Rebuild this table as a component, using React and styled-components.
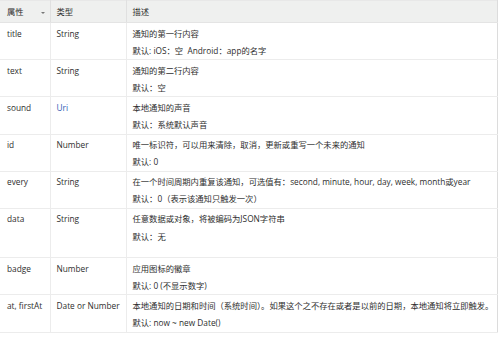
import React from 'react';
import styled, { createGlobalStyle } from 'styled-components';

const GlobalStyle = createGlobalStyle`
  body {
    margin: 0;
    background: #ffffff;
    font-family: "Open Sans", "Noto Sans CJK SC", sans-serif;
  }
`;

const Table = styled.table`
  width: 498px;
  border-collapse: collapse;
  table-layout: fixed;
  font-size: 8.3px;
  color: #2e2e2e;
  border-top: 1px solid #e8e8e8;
  border-right: 1px solid #dcdcdc;
  border-bottom: 1px solid #e2e2e2;
`;

const HeadCell = styled.th`
  position: relative;
  height: 21px;
  padding: 0 6px;
  text-align: left;
  font-weight: normal;
  background: #eff0ef;
  border-left: ${(p) => (p.$first ? 'none' : '1px solid #e0e0e0')};
  border-bottom: 1px solid #e4e4e4;
  padding-left: ${(p) => (p.$first ? '7px' : '6px')};
  line-height: 21px;
`;

const SortArrow = styled.span`
  position: absolute;
  right: 5px;
  top: 11px;
  width: 0;
  height: 0;
  border-left: 2px solid transparent;
  border-right: 2px solid transparent;
  border-top: 2.5px solid #777;
`;

const Row = styled.tr`
  border-bottom: 1px solid #ececec;
`;

const Cell = styled.td`
  vertical-align: top;
  padding: 1.5px 6px ${(p) => (p.$tall ? '12.5px' : '0.5px')};
  padding-left: ${(p) => (p.$first ? '7px' : '6px')};
  border-left: ${(p) => (p.$first ? 'none' : '1px solid #ececec')};
  white-space: pre;
`;

const Line = styled.div`
  height: 17.1px;
  line-height: 17.1px;
  overflow: visible;
`;

const TypeText = styled.span`
  color: ${(p) => (p.$link ? '#2f5cb5' : 'inherit')};
`;

const rows = [
  { name: 'title', type: 'String', desc: ['通知的第一行内容', '默认: iOS：空  Android：app的名字'] },
  { name: 'text', type: 'String', desc: ['通知的第二行内容', '默认：空'] },
  { name: 'sound', type: 'Uri', link: true, desc: ['本地通知的声音', '默认：系统默认声音'] },
  { name: 'id', type: 'Number', desc: ['唯一标识符，可以用来清除，取消，更新或重写一个未来的通知', '默认: 0'] },
  {
    name: 'every',
    type: 'String',
    desc: ['在一个时间周期内重复该通知，可选值有：second, minute, hour, day, week, month或year', '默认：0（表示该通知只触发一次）'],
  },
  { name: 'data', type: 'String', tall: true, desc: ['任意数据或对象，将被编码为JSON字符串', '默认：无'] },
  { name: 'badge', type: 'Number', desc: ['应用图标的徽章', '默认: 0 (不显示数字)'] },
  {
    name: 'at, firstAt',
    type: 'Date or Number',
    desc: ['本地通知的日期和时间（系统时间）。如果这个之不存在或者是以前的日期，本地通知将立即触发。', '默认: now ~ new Date()'],
  },
];

function App() {
  return (
    <>
      <GlobalStyle />
      <Table>
        <colgroup>
          <col style={{ width: 50 }} />
          <col style={{ width: 76 }} />
          <col />
        </colgroup>
        <thead>
          <tr>
            <HeadCell $first>
              属性
              <SortArrow />
            </HeadCell>
            <HeadCell>类型</HeadCell>
            <HeadCell>描述</HeadCell>
          </tr>
        </thead>
        <tbody>
          {rows.map((r) => (
            <Row key={r.name}>
              <Cell $first $tall={r.tall}>
                <Line>{r.name}</Line>
              </Cell>
              <Cell $tall={r.tall}>
                <Line>
                  <TypeText $link={r.link}>{r.type}</TypeText>
                </Line>
              </Cell>
              <Cell $tall={r.tall}>
                {r.desc.map((d) => (
                  <Line key={d}>{d}</Line>
                ))}
              </Cell>
            </Row>
          ))}
        </tbody>
      </Table>
    </>
  );
}

export default App;
